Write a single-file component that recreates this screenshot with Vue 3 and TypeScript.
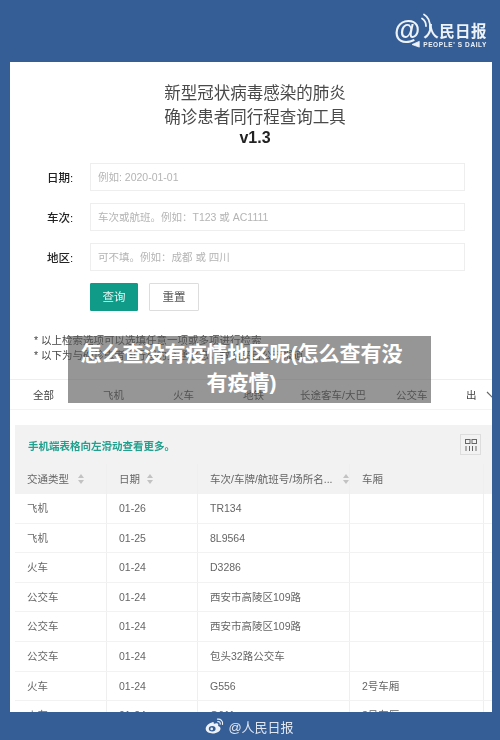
<script setup lang="ts">
interface Row {
  type: string
  date: string
  no: string
  car: string
}

const fields = [
  { label: '日期:', hint: '例如: 2020-01-01' },
  { label: '车次:', hint: '车次或航班。例如：T123 或 AC1111' },
  { label: '地区:', hint: '可不填。例如：成都 或 四川' },
]

const tabs = ['全部', '飞机', '火车', '地铁', '长途客车/大巴', '公交车', '出']

const rows: Row[] = [
  { type: '飞机', date: '01-26', no: 'TR134', car: '' },
  { type: '飞机', date: '01-25', no: '8L9564', car: '' },
  { type: '火车', date: '01-24', no: 'D3286', car: '' },
  { type: '公交车', date: '01-24', no: '西安市高陵区109路', car: '' },
  { type: '公交车', date: '01-24', no: '西安市高陵区109路', car: '' },
  { type: '公交车', date: '01-24', no: '包头32路公交车', car: '' },
  { type: '火车', date: '01-24', no: 'G556', car: '2号车厢' },
  { type: '火车', date: '01-24', no: 'G611', car: '3号车厢' },
]
</script>

<template>
  <div class="page">
    <header class="top">
      <div class="logo">
        <span class="at">@</span>
        <svg class="waves" width="20" height="36" viewBox="0 0 20 36" fill="none" stroke="#eef3f8" stroke-linecap="round">
          <path d="M9 5.500c2.500 1.500 4 4 4 7.500" stroke-width="1.800" />
          <path d="M11 1.500c4.500 2.500 6.500 6.500 6 14" stroke-width="1.800" />
          <path d="M6 28.500l-7 3 7 2.500z" fill="#eef3f8" stroke-width="0.800" />
        </svg>
        <div class="logo-text">
          <strong>人民日报</strong>
          <small>PEOPLE' S DAILY</small>
        </div>
      </div>
    </header>

    <main class="card">
      <div class="title">
        <div>新型冠状病毒感染的肺炎</div>
        <div>确诊患者同行程查询工具</div>
        <b>v1.3</b>
      </div>

      <form class="form">
        <div v-for="f in fields" :key="f.label" class="field">
          <label>{{ f.label }}</label>
          <div class="input">{{ f.hint }}</div>
        </div>
        <div class="buttons">
          <span class="btn primary">查询</span>
          <span class="btn">重置</span>
        </div>
      </form>

      <ul class="notes">
        <li>以上检索选项可以选填任意一项或多项进行检索</li>
        <li>以下为与确诊患者同行程的交通信息，数据来自公开报道</li>
      </ul>

      <nav class="tabs">
        <span v-for="t in tabs" :key="t">{{ t }}</span>
        <svg class="more" width="12" height="8" viewBox="0 0 12 8" fill="none" stroke="#666" stroke-width="1.2">
          <path d="M1 1l5 5 5-5" />
        </svg>
      </nav>

      <section class="panel">
        <div class="toolbar">
          <span class="tip">手机端表格向左滑动查看更多。</span>
          <span class="cols">
            <svg width="14" height="14" viewBox="0 0 14 14" fill="none" stroke="#666" stroke-width="1">
              <rect x="1.500" y="1.500" width="4.500" height="4" />
              <rect x="8" y="1.500" width="4.500" height="4" />
              <path d="M2 8v5M5.500 8v5M8.500 8v5M12 8v5" />
            </svg>
          </span>
        </div>
        <div class="row head">
          <div>交通类型<i class="sort"></i></div>
          <div>日期<i class="sort short"></i></div>
          <div class="ellipsis">车次/车牌/航班号/场所名...<i class="sort wide"></i></div>
          <div>车厢</div>
          <div></div>
        </div>
        <div v-for="(r, i) in rows" :key="i" class="row">
          <div>{{ r.type }}</div>
          <div>{{ r.date }}</div>
          <div>{{ r.no }}</div>
          <div>{{ r.car }}</div>
          <div></div>
        </div>
      </section>
    </main>

    <footer class="foot">
      <svg width="19" height="16" viewBox="0 0 19 16">
        <path d="M7.500 4.200C3.800 5 .7 8 .7 10.800c0 2.800 3.400 4.700 7 4.700 4.400 0 7.800-2.400 7.800-5 0-1.600-1.500-2.300-2.400-2.600.5-1.300.2-2.500-1.300-2.700-1.100-.1-2.200.3-3 .7.300-1.300-.2-2.300-1.300-1.700z" fill="#eef2f7" />
        <ellipse cx="7.200" cy="10.800" rx="3.400" ry="2.700" fill="#365e96" />
        <circle cx="6.700" cy="10.900" r="1.300" fill="#eef2f7" />
        <path d="M12.500 1.200c3-.6 5.800 2 5 5.200M12.800 3.600c1.500-.3 2.800 1 2.400 2.600" fill="none" stroke="#eef2f7" stroke-width="1.200" stroke-linecap="round" />
      </svg>
      <span>@人民日报</span>
    </footer>

    <div class="banner">怎么查没有疫情地区呢(怎么查有没有疫情)</div>
  </div>
</template>

<style>
body {
  margin: 0;
  background: #365e96;
}
</style>

<style scoped>
.page {
  position: relative;
  width: 500px;
  height: 740px;
  overflow: hidden;
  background: #365e96;
  font-family: "Liberation Sans", "Noto Sans CJK SC", sans-serif;
  color: #555;
}

.top {
  height: 62px;
  display: flex;
  justify-content: flex-end;
  padding: 12px 13px 0 0;
  box-sizing: border-box;
}

.logo {
  display: flex;
  align-items: flex-start;
  color: #eef3f8;
  filter: blur(0.4px);
}

.at {
  font-size: 27px;
  line-height: 30px;
  font-weight: 700;
  margin-top: 3px;
}

.waves {
  margin: 1px 0 0 -7px;
  overflow: visible;
}

.logo-text {
  display: flex;
  flex-direction: column;
  margin: 11px 0 0 -10px;
}

.logo-text strong {
  font-size: 15.500px;
  line-height: 18px;
  font-weight: 700;
  letter-spacing: 0.4px;
}

.logo-text small {
  font-size: 6.500px;
  line-height: 8px;
  font-weight: 700;
  letter-spacing: 0.6px;
  white-space: nowrap;
}

.card {
  width: 482px;
  height: 650px;
  margin-left: 10px;
  background: #fff;
  overflow: hidden;
  filter: blur(0.5px);
}

.title {
  padding-top: 19px;
  text-align: center;
  margin-left: 8px;
  font-size: 16.500px;
  line-height: 24px;
  color: #4a4a4a;
}

.title b {
  display: block;
  font-size: 16px;
  line-height: 18px;
  color: #222;
}

.form {
  padding-top: 16px;
  display: flex;
  flex-direction: column;
  gap: 12px;
}

.field {
  display: flex;
  align-items: center;
}

.field label {
  width: 62px;
  margin-left: 18px;
  box-sizing: border-box;
  padding-left: 19px;
  font-size: 11.500px;
  font-weight: 500;
  color: #222;
}

.input {
  width: 375px;
  height: 28px;
  box-sizing: border-box;
  border: 1px solid #eeeeee;
  padding-left: 7px;
  font-size: 10.500px;
  line-height: 26px;
  color: #b4b4b4;
}

.buttons {
  display: flex;
  gap: 11px;
  margin-left: 80px;
}

.btn {
  width: 50px;
  height: 28px;
  box-sizing: border-box;
  border: 1px solid #ddd;
  border-radius: 1px;
  font-size: 11.500px;
  line-height: 26px;
  text-align: center;
  color: #555;
}

.btn.primary {
  width: 48px;
  border-color: #109a88;
  background: #109a88;
  color: #e6f5f2;
}

.notes {
  margin: 22px 0 0;
  padding: 0 0 0 24px;
  list-style: none;
  font-size: 10.500px;
  line-height: 15px;
  color: #444;
}

.notes li::before {
  content: "*";
  margin-right: 3px;
}

.tabs {
  display: flex;
  align-items: center;
  height: 31px;
  box-sizing: border-box;
  margin-top: 16px;
  padding-left: 23px;
  border-top: 1px solid #eee;
  border-bottom: 1px solid #f3f3f3;
  font-size: 10.500px;
  color: #444;
  white-space: nowrap;
}

.tabs span {
  flex: none;
}

.tabs span:nth-child(1) { width: 70px; }
.tabs span:nth-child(2) { width: 70px; }
.tabs span:nth-child(3) { width: 70px; }
.tabs span:nth-child(4) { width: 57px; }
.tabs span:nth-child(5) { width: 96px; }
.tabs span:nth-child(6) { width: 70px; }

.more {
  flex: none;
  margin-left: 9px;
}

.panel {
  width: 477px;
  margin: 15px 0 0 5px;
  background: #f2f2f2;
}

.toolbar {
  display: flex;
  justify-content: space-between;
  align-items: center;
  height: 39px;
  padding: 0 11px 0 13px;
}

.tip {
  margin-top: 1px;
  font-size: 10.500px;
  font-weight: 700;
  color: #22a08e;
}

.cols {
  display: flex;
  align-items: center;
  justify-content: center;
  width: 19px;
  height: 19px;
  border: 1px solid #ddd;
}

.row {
  display: grid;
  grid-template-columns: 92px 91px 152px 134px 8px;
  height: 29.600px;
  background: #fff;
  border-bottom: 1px solid #f2f2f2;
  box-sizing: border-box;
  font-size: 10.500px;
  line-height: 29.500px;
  color: #666;
}

.row > div {
  padding-left: 12px;
  border-right: 1px solid #efefef;
  white-space: nowrap;
  overflow: hidden;
}

.row.head {
  height: 30px;
  background: #f2f2f2;
  border-bottom: 0;
  line-height: 31px;
}

.row.head .ellipsis {
  overflow: visible;
}

.sort {
  display: inline-block;
  position: relative;
  width: 6px;
  height: 10px;
  margin-left: 9px;
  vertical-align: -1px;
}

.sort.short {
  margin-left: 7px;
}

.sort.wide {
  margin-left: 10px;
}

.sort::before,
.sort::after {
  content: "";
  position: absolute;
  left: 0;
  border-style: solid;
  border-color: transparent;
}

.sort::before {
  top: 0;
  border-width: 0 3px 4px;
  border-bottom-color: #c2c2c2;
}

.sort::after {
  bottom: 0;
  border-width: 4px 3px 0;
  border-top-color: #c2c2c2;
}

.foot {
  height: 28px;
  display: flex;
  align-items: center;
  justify-content: center;
  gap: 4px;
  padding-right: 1px;
  font-size: 13px;
  color: #dfe6f0;
  filter: blur(0.4px);
}

.banner {
  position: absolute;
  left: 68px;
  top: 336px;
  width: 363px;
  height: 67px;
  box-sizing: border-box;
  padding: 3px 26px 0 10px;
  background: rgba(90, 90, 90, 0.64);
  color: #fff;
  font-size: 21px;
  font-weight: 700;
  line-height: 29px;
  text-align: center;
}
</style>
